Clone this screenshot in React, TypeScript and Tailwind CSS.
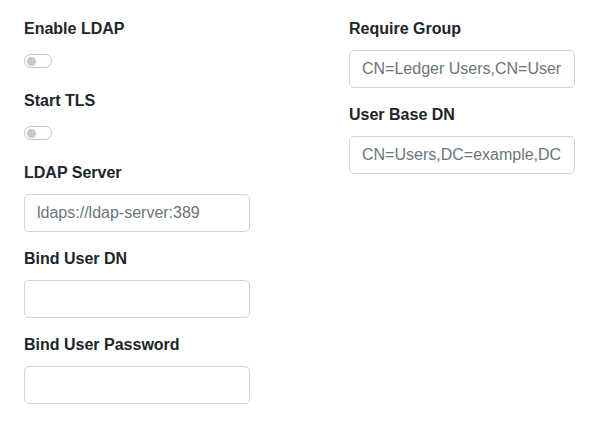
import type { ReactNode } from "react";

const font = "font-['Liberation_Sans',Arial,Helvetica,sans-serif]";

function Label({ children }: { children: ReactNode }) {
  return <label className="block text-base font-bold leading-5 text-[#212529]">{children}</label>;
}

function Toggle() {
  return (
    <div className="mt-[15px] mb-[23px] flex h-[14px] w-[28px] items-center rounded-full border border-[#c4c4c4] bg-white px-[2px]">
      <span className="block size-[9px] rounded-full bg-[#c8c8c8]" />
    </div>
  );
}

function Field({ label, placeholder, type = "text" }: { label: string; placeholder?: string; type?: string }) {
  return (
    <div className="mb-[17px]">
      <Label>{label}</Label>
      <input
        type={type}
        placeholder={placeholder}
        className="mt-[11px] block h-[38px] w-[226px] rounded-[5px] border border-[#d2d2d2] bg-white px-3 text-base text-[#495057] outline-none placeholder:text-[#6c757d]"
      />
    </div>
  );
}

export default function App() {
  return (
    <div className={`min-h-screen bg-white pt-[19px] pl-6 ${font}`}>
      <div className="grid grid-cols-[226px_226px] gap-x-[99px]">
        <div>
          <Label>Enable LDAP</Label>
          <Toggle />
          <Label>Start TLS</Label>
          <Toggle />
          <Field label="LDAP Server" placeholder="ldaps://ldap-server:389" />
          <Field label="Bind User DN" />
          <Field label="Bind User Password" type="password" />
        </div>
        <div>
          <Field label="Require Group" placeholder="CN=Ledger Users,CN=Users,DC=example,DC=com" />
          <Field label="User Base DN" placeholder="CN=Users,DC=example,DC=com" />
        </div>
      </div>
    </div>
  );
}
